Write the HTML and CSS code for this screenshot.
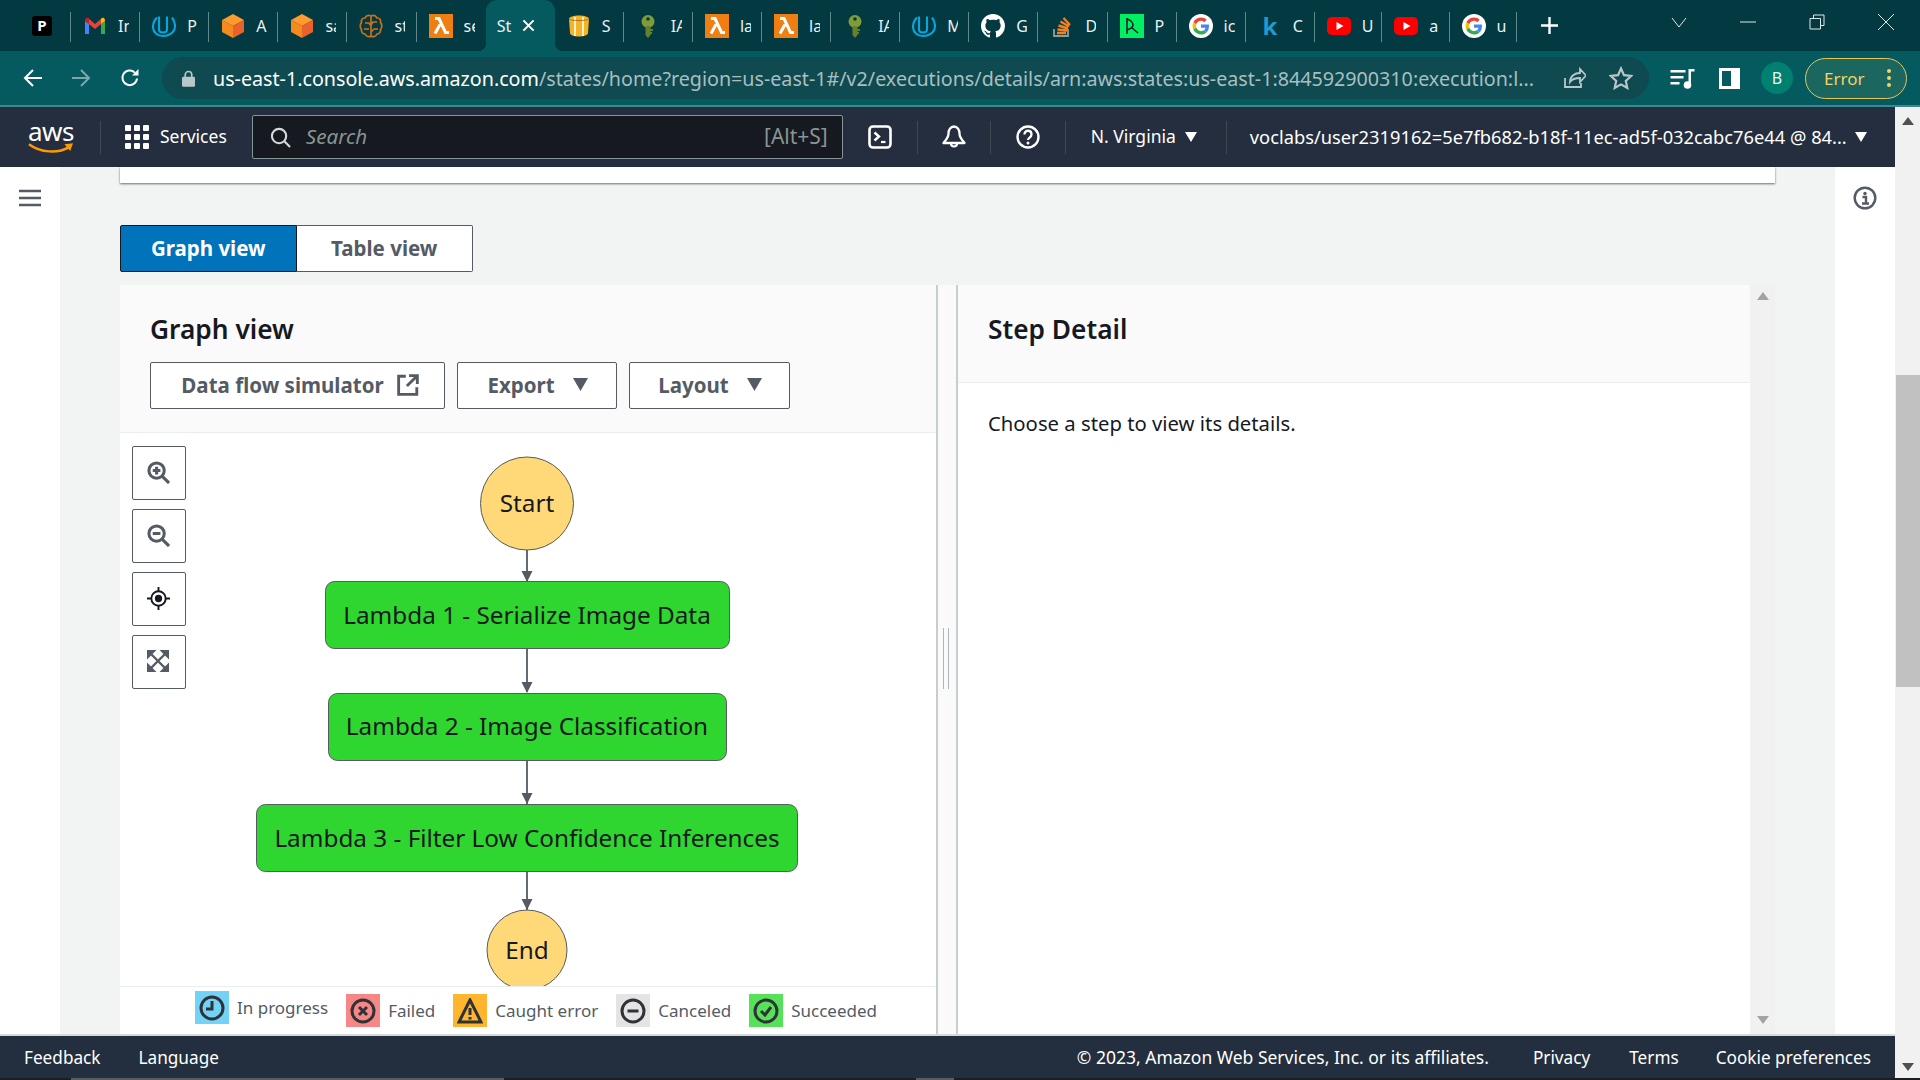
FILE: index.html
```html
<!DOCTYPE html>
<html lang="en">
<head>
<meta charset="utf-8">
<title>Step Functions</title>
<link rel="stylesheet" href="styles.css">
</head>
<body>
<svg class="defs" aria-hidden="true">
  <symbol id="i-p" viewBox="0 0 24 24"><rect x="2" y="2" width="20" height="20" rx="3" fill="#000"/><text x="12" y="17" text-anchor="middle" class="fav-letter">P</text></symbol>
  <symbol id="i-gmail" viewBox="0 0 24 24"><path d="M2 7v13h4V10z" fill="#4285f4"/><path d="M22 7v13h-4V10z" fill="#34a853"/><path d="M2 7l10 8 10-8-3-3-7 6-7-6z" fill="#ea4335"/><path d="M22 7l-4 3V5l1-1c1.500-1 3 0 3 3z" fill="#fbbc04"/><path d="M2 7l4 3V5L5 4C3.500 3 2 4 2 7z" fill="#c5221f"/></symbol>
  <symbol id="i-uda" viewBox="0 0 24 24"><path d="M5 3.500C2.500 6 1 9 1 13c0 6 5 9 10 9s12-3 12-10c0-4-1-6-3-8.500M7 2.500v13c0 2 2 3 4 3s4-1 4-3V2.500" fill="none" stroke="#02a9df" stroke-width="2.100"/></symbol>
  <symbol id="i-cube" viewBox="0 0 24 24"><path d="M12 0l11 6-11 6L1 6z" fill="#ff9a2e"/><path d="M1 6l11 6v12L1 18z" fill="#f58a1f"/><path d="M23 6l-11 6v12l11-6z" fill="#e8622a"/></symbol>
  <symbol id="i-brain" viewBox="0 0 24 24"><g fill="none" stroke="#c8701c" stroke-width="1.700"><path d="M12 2C9 .8 7 2 6 4 3 4 2 6 2.500 8.500.8 10 .8 14 2.500 15.500 2 18 4 20 6 20c1 2.500 4 3.500 6 2 2 1.500 5 .5 6-2 2 0 4-2 3.500-4.500 1.700-1.500 1.700-5.500 0-7C22 6 21 4 18 4c-1-2-3-3.200-6-2z"/><path d="M12 2v20M6 9h4l2 3M18 8h-4l-2 3M5 15h5M19 15h-4l-3 3"/></g></symbol>
  <symbol id="i-lambda" viewBox="0 0 24 24"><rect width="24" height="24" fill="#f07f13"/><path d="M6 4.500h4l6.500 14H20M11 10.500L6 19.500" fill="none" stroke="#fff" stroke-width="3"/></symbol>
  <symbol id="i-s3" viewBox="0 0 24 24"><path d="M2 5c0-2 5-3.500 10-3.500S22 3 22 5l-1 14c0 2-4 3.500-9 3.500S3 21 3 19z" fill="#f4b32a"/><path d="M8 3v19M16 3v19" stroke="#fff2c0" stroke-width="2"/><path d="M2 5c2 2 18 2 20 0" fill="none" stroke="#a8761a" stroke-width="1"/></symbol>
  <symbol id="i-key" viewBox="0 0 24 24"><circle cx="12" cy="7.500" r="6.500" fill="#7f9c36"/><circle cx="12" cy="5" r="1.800" fill="#033a42"/><path d="M9.500 12h5v9L12 24l-2.500-3z" fill="#67812a"/><path d="M14 15h3v2h-3zM14 18h2v2h-2z" fill="#67812a"/></symbol>
  <symbol id="i-gh" viewBox="0 0 16 16"><path fill="#fff" fill-rule="evenodd" d="M8 0C3.580 0 0 3.580 0 8c0 3.540 2.290 6.530 5.470 7.590.4.070.55-.17.55-.38 0-.19-.01-.82-.01-1.490-2.010.37-2.530-.49-2.690-.94-.09-.23-.48-.94-.82-1.130-.28-.15-.68-.52-.01-.53.63-.01 1.080.58 1.230.82.720 1.210 1.870.87 2.330.66.070-.52.280-.87.510-1.070-1.780-.2-3.640-.89-3.640-3.950 0-.87.310-1.590.820-2.150-.08-.2-.36-1.020.08-2.120 0 0 .67-.21 2.200.82.640-.18 1.320-.27 2-.27s1.360.09 2 .27c1.530-1.040 2.200-.82 2.200-.82.440 1.100.160 1.920.080 2.120.51.560.82 1.270.82 2.150 0 3.070-1.870 3.750-3.650 3.950.290.250.540.730.540 1.480 0 1.070-.01 1.930-.01 2.200 0 .210.150.460.550.380A8.013 8.013 0 0016 8c0-4.420-3.580-8-8-8z"/></symbol>
  <symbol id="i-so" viewBox="0 0 24 24"><path d="M4 15v7h14v-7" fill="none" stroke="#9a9a92" stroke-width="1.800"/><g stroke="#f48024" stroke-width="2.400"><path d="M7 19h9M7.500 15.500l9.500 1M8.500 11.500l9.500 3M10.500 7.500l8.500 5M13.500 4l6.500 7"/></g></symbol>
  <symbol id="i-dc" viewBox="0 0 24 24"><rect width="24" height="24" fill="#03ef62"/><path d="M7 4v16M7 5c4 1 6 4 6 6 0 2-3 4-6 5M11 13l7 6" fill="none" stroke="#05192d" stroke-width="1.500"/></symbol>
  <symbol id="i-g" viewBox="0 0 24 24"><circle cx="12" cy="12" r="12" fill="#fff"/><g transform="translate(3.500 3.500) scale(.354)"><path fill="#ea4335" d="M24 9.500c3.500 0 6.700 1.200 9.200 3.600l6.900-6.900C35.900 2.400 30.500 0 24 0 14.600 0 6.500 5.400 2.600 13.200l8 6.200C12.500 13.700 17.800 9.500 24 9.500z"/><path fill="#4285f4" d="M46.500 24.500c0-1.600-.1-3.100-.4-4.500H24v9h12.700c-.5 2.900-2.200 5.400-4.700 7l7.700 6c4.500-4.200 6.800-10.300 6.800-17.500z"/><path fill="#fbbc05" d="M10.500 28.600c-.5-1.400-.8-3-.8-4.600s.3-3.200.8-4.600l-8-6.200C.9 16.500 0 20.100 0 24s.9 7.500 2.600 10.800z"/><path fill="#34a853" d="M24 48c6.500 0 11.900-2.100 15.900-5.800l-7.700-6c-2.200 1.500-4.900 2.300-8.200 2.300-6.200 0-11.500-4.200-13.400-9.900l-8 6.200C6.500 42.600 14.600 48 24 48z"/></g></symbol>
  <symbol id="i-k" viewBox="0 0 24 24"><text x="12" y="21" text-anchor="middle" class="fav-k">k</text></symbol>
  <symbol id="i-yt" viewBox="0 0 24 24"><rect y="3" width="24" height="18" rx="5" fill="#f00"/><path d="M9.500 8l7 4-7 4z" fill="#fff"/></symbol>
</svg>

<div class="tabstrip">
  <div class="tab tab-first"><svg class="fav"><use href="#i-p"/></svg></div>
  <div class="tab"><svg class="fav"><use href="#i-gmail"/></svg><span class="tab-title">In</span></div>
  <div class="tab"><svg class="fav"><use href="#i-uda"/></svg><span class="tab-title">P</span></div>
  <div class="tab"><svg class="fav"><use href="#i-cube"/></svg><span class="tab-title">A</span></div>
  <div class="tab"><svg class="fav"><use href="#i-cube"/></svg><span class="tab-title">sa</span></div>
  <div class="tab"><svg class="fav"><use href="#i-brain"/></svg><span class="tab-title">st</span></div>
  <div class="tab tab-nosep"><svg class="fav"><use href="#i-lambda"/></svg><span class="tab-title">se</span></div>
  <div class="tab tab-active"><span class="tab-title">St</span><svg class="tab-x" viewBox="0 0 14 14"><path d="M1.500 1.500l11 11M12.500 1.500l-11 11"/></svg></div>
  <div class="tab"><svg class="fav"><use href="#i-s3"/></svg><span class="tab-title">S</span></div>
  <div class="tab"><svg class="fav"><use href="#i-key"/></svg><span class="tab-title">IA</span></div>
  <div class="tab"><svg class="fav"><use href="#i-lambda"/></svg><span class="tab-title">la</span></div>
  <div class="tab"><svg class="fav"><use href="#i-lambda"/></svg><span class="tab-title">la</span></div>
  <div class="tab"><svg class="fav"><use href="#i-key"/></svg><span class="tab-title">IA</span></div>
  <div class="tab"><svg class="fav"><use href="#i-uda"/></svg><span class="tab-title">M</span></div>
  <div class="tab"><svg class="fav"><use href="#i-gh"/></svg><span class="tab-title">G</span></div>
  <div class="tab"><svg class="fav"><use href="#i-so"/></svg><span class="tab-title">D</span></div>
  <div class="tab"><svg class="fav"><use href="#i-dc"/></svg><span class="tab-title">P</span></div>
  <div class="tab"><svg class="fav"><use href="#i-g"/></svg><span class="tab-title">ic</span></div>
  <div class="tab"><svg class="fav"><use href="#i-k"/></svg><span class="tab-title">C</span></div>
  <div class="tab tab-narrow"><svg class="fav"><use href="#i-yt"/></svg><span class="tab-title">U</span></div>
  <div class="tab tab-narrow"><svg class="fav"><use href="#i-yt"/></svg><span class="tab-title">a</span></div>
  <div class="tab tab-narrow"><svg class="fav"><use href="#i-g"/></svg><span class="tab-title">u</span></div>
  <svg class="newtab" viewBox="0 0 18 18"><path d="M9 0v18M0 9h18"/></svg>
  <div class="winctl">
    <svg class="wc" viewBox="0 0 16 16"><path d="M1 4l7 9 7-9"/></svg>
    <svg class="wc" viewBox="0 0 16 16"><path d="M0 8h16"/></svg>
    <svg class="wc" viewBox="0 0 16 16"><path d="M1 4.500h10.500V15H1zM4.500 4.500V1H15v10.500h-3.500"/></svg>
    <svg class="wc" viewBox="0 0 16 16"><path d="M0 0l16 16M16 0L0 16"/></svg>
  </div>
</div>

<div class="toolbar">
  <svg class="tb-ic tb-back" viewBox="0 0 20 20"><path d="M19 10H2M10 2l-8 8 8 8"/></svg>
  <svg class="tb-ic tb-fwd" viewBox="0 0 20 20"><path d="M1 10h17M10 2l8 8-8 8"/></svg>
  <svg class="tb-ic tb-reload" viewBox="0 0 20 20"><path d="M17 10.500A7.300 7.300 0 1 1 14.800 4.600"/><path class="solid" d="M12 7.500h6.500V1z"/></svg>
  <div class="omnibox">
    <svg class="lock" viewBox="0 0 14 18"><path d="M3.500 8V5a3.500 3.500 0 0 1 7 0v3" fill="none" stroke="#b9c7c9" stroke-width="1.800"/><rect y="7" width="14" height="11" rx="1.500" fill="#b9c7c9"/></svg>
    <span class="url"><span class="url-host">us-east-1.console.aws.amazon.com</span>/states/home?region=us-east-1#/v2/executions/details/arn:aws:states:us-east-1:844592900310:execution:l...</span>
    <svg class="omni-ic omni-share" viewBox="0 0 24 24"><path d="M3 12v9h16v-4M8 16c0-6 5-9 10-9V3l6 6.500-6 6.500v-4c-4 0-8 1-10 4z"/></svg>
    <svg class="omni-ic omni-star" viewBox="0 0 24 24"><path d="M12 2.500l3 6.700 7.200.8-5.400 4.900 1.500 7.100L12 18.400l-6.300 3.600 1.500-7.100L1.800 10l7.200-.8z"/></svg>
  </div>
  <svg class="tb-media" viewBox="0 0 24 22"><path d="M0 3h15v2.400H0zM0 9h13v2.400H0zM0 15h9v2.400H0z"/><path d="M18 2h6v2.500h-3.500V18h-2.500z"/><circle cx="17" cy="18" r="3.800"/></svg>
  <div class="tb-panel"><span class="tb-panel-in"></span></div>
  <div class="avatar">B</div>
  <div class="errpill"><span>Error</span><span class="dots"><i></i><i></i><i></i></span></div>
</div>
<div class="toolbar-line"></div>

<div class="viewport">
  <div class="page">
    <header class="topnav">
      <div class="aws-logo">
        <span class="aws-word">aws</span>
        <svg class="aws-smile" viewBox="0 0 48 13"><path d="M1 2c12 9 30 10 42 3" fill="none" stroke="#ff9900" stroke-width="2.600"/><path d="M38 2l9-1-3 8z" fill="#ff9900"/></svg>
      </div>
      <span class="nav-sep nav-sep-logo"></span>
      <svg class="grid-ic" viewBox="0 0 24 24"><g><rect width="6" height="6" rx="1"/><rect x="9" width="6" height="6" rx="1"/><rect x="18" width="6" height="6" rx="1"/><rect y="9" width="6" height="6" rx="1"/><rect x="9" y="9" width="6" height="6" rx="1"/><rect x="18" y="9" width="6" height="6" rx="1"/><rect y="18" width="6" height="6" rx="1"/><rect x="9" y="18" width="6" height="6" rx="1"/><rect x="18" y="18" width="6" height="6" rx="1"/></g></svg>
      <span class="services">Services</span>
      <div class="searchbox">
        <svg class="search-ic" viewBox="0 0 22 22"><circle cx="9.500" cy="9.500" r="7.500"/><path d="M15 15l6 6"/></svg>
        <span class="search-ph">Search</span>
        <span class="search-key">[Alt+S]</span>
      </div>
      <svg class="nav-ic nav-shell" viewBox="0 0 24 24"><rect x="1.500" y="1.500" width="21" height="21" rx="3.500" fill="none" stroke="#fff" stroke-width="2.600"/><path d="M6.500 7.500l4.500 4-4.500 4" fill="none" stroke="#fff" stroke-width="2.400"/><path d="M13 17h4.500" stroke="#fff" stroke-width="2.200"/></svg>
      <span class="nav-sep"></span>
      <svg class="nav-ic nav-bell" viewBox="0 0 24 24"><path d="M12 1.500c-3.500 0-5.500 3.500-5.500 7 0 4-2.500 6.500-5 9.500h21c-2.500-3-5-5.500-5-9.500 0-3.500-2-7-5.500-7z" fill="none" stroke="#fff" stroke-width="2.300" stroke-linejoin="round"/><path d="M9 18.500a3 3 0 0 0 6 0" fill="none" stroke="#fff" stroke-width="2.200"/></svg>
      <span class="nav-sep"></span>
      <svg class="nav-ic nav-help" viewBox="0 0 24 24"><circle cx="12" cy="12" r="10.500" fill="none" stroke="#fff" stroke-width="2.400"/><path d="M8.500 9.500c0-5 7-5 7 0 0 3-3.500 3-3.500 5.500" fill="none" stroke="#fff" stroke-width="2.300"/><circle cx="12" cy="18" r="1.500" fill="#fff"/></svg>
      <span class="nav-sep"></span>
      <span class="region">N. Virginia</span>
      <svg class="caret caret-region" viewBox="0 0 12 10"><path d="M0 0h12L6 10z"/></svg>
      <span class="nav-sep nav-sep-region"></span>
      <span class="account">voclabs/user2319162=5e7fb682-b18f-11ec-ad5f-032cabc76e44 @ 84...</span>
      <svg class="caret caret-account" viewBox="0 0 12 10"><path d="M0 0h12L6 10z"/></svg>
    </header>

    <div class="body">
      <aside class="side side-left">
        <svg class="burger" viewBox="0 0 22 18"><path d="M0 2h22M0 9h22M0 16h22"/></svg>
      </aside>
      <main class="content">
        <div class="top-card"></div>
        <div class="segmented">
          <button class="seg seg-on">Graph view</button>
          <button class="seg">Table view</button>
        </div>
        <section class="split">
          <div class="pane-graph">
            <div class="graph-head">
              <h2 class="pane-title">Graph view</h2>
              <div class="graph-actions">
                <button class="btn btn-sim">Data flow simulator
                  <svg class="btn-ext" viewBox="0 0 20 20"><path d="M8 2H1.500v16.500H18V12M11 1.500h7.500V9M18 2L9 11"/></svg>
                </button>
                <button class="btn btn-menu">Export<svg class="btn-caret" viewBox="0 0 14 12"><path d="M0 0h14L7 12z"/></svg></button>
                <button class="btn btn-menu btn-layout">Layout<svg class="btn-caret" viewBox="0 0 14 12"><path d="M0 0h14L7 12z"/></svg></button>
              </div>
            </div>
            <div class="canvas">
              <svg class="flow" viewBox="0 0 816 553" width="816" height="553">
                <g class="edges">
                  <path d="M407 117v32M407 215v44M407 327v44M407 438v39"/>
                </g>
                <g class="heads">
                  <path d="M401.500 138h11l-5.500 11zM401.500 249h11l-5.500 11zM401.500 360h11l-5.500 11zM401.500 466h11l-5.500 11z"/>
                </g>
                <circle class="n-term" cx="407" cy="70.500" r="46.500"/>
                <text class="n-label" x="407" y="79">Start</text>
                <rect class="n-task" x="205.500" y="148.500" width="404" height="67" rx="9"/>
                <text class="n-label" x="407" y="191">Lambda 1 - Serialize Image Data</text>
                <rect class="n-task" x="208.500" y="260.500" width="398" height="67" rx="9"/>
                <text class="n-label" x="407" y="302">Lambda 2 - Image Classification</text>
                <rect class="n-task" x="136.500" y="371.500" width="541" height="67" rx="9"/>
                <text class="n-label" x="407" y="414">Lambda 3 - Filter Low Confidence Inferences</text>
                <circle class="n-term" cx="407" cy="517" r="40"/>
                <text class="n-label" x="407" y="526">End</text>
              </svg>
              <div class="zoomctl">
                <button class="zbtn"><svg class="zic" viewBox="0 0 24 24"><circle cx="10" cy="10" r="8"/><path d="M16 16l7 7M6 10h8M10 6v8"/></svg></button>
                <button class="zbtn"><svg class="zic" viewBox="0 0 24 24"><circle cx="10" cy="10" r="8"/><path d="M16 16l7 7M6 10h8"/></svg></button>
                <button class="zbtn"><svg class="zic zic-target" viewBox="0 0 24 24"><circle cx="12" cy="12" r="7.500"/><circle class="zdot" cx="12" cy="12" r="3.800"/><path d="M12 0v4.500M12 19.500V24M0 12h4.500M19.500 12H24"/></svg></button>
                <button class="zbtn"><svg class="zic-fit" viewBox="0 0 22 22"><path d="M0 0h9.500L0 9.500zM22 0v9.500L12.500 0zM0 22v-9.500L9.500 22zM22 22h-9.500l9.500-9.500z" fill="#545b64"/><path d="M3 3l16 16M19 3L3 19" fill="none" stroke="#545b64" stroke-width="2.400"/></svg></button>
              </div>
            </div>
            <div class="legend">
              <div class="leg leg-raised"><span class="leg-tile t-blue"><svg class="leg-ic" viewBox="0 0 26 26"><circle cx="13" cy="13" r="11"/><path d="M13 6v8H7"/></svg></span><span>In progress</span></div>
              <div class="leg"><span class="leg-tile t-red"><svg class="leg-ic" viewBox="0 0 26 26"><circle cx="13" cy="13" r="11"/><path d="M9 9l8 8M17 9l-8 8"/></svg></span><span>Failed</span></div>
              <div class="leg"><span class="leg-tile t-orange"><svg class="leg-ic" viewBox="0 0 26 26"><path d="M13 2L2 24h22z"/><path d="M13 10v7M13 19v2.500"/></svg></span><span>Caught error</span></div>
              <div class="leg"><span class="leg-tile t-grey"><svg class="leg-ic" viewBox="0 0 26 26"><circle cx="13" cy="13" r="11"/><path d="M7.500 13h11"/></svg></span><span>Canceled</span></div>
              <div class="leg"><span class="leg-tile t-green"><svg class="leg-ic" viewBox="0 0 26 26"><circle cx="13" cy="13" r="11"/><path d="M8 13l4 4 6-8"/></svg></span><span>Succeeded</span></div>
            </div>
          </div>
          <div class="resizer"><span class="grip"></span></div>
          <div class="pane-detail">
            <div class="detail-head"><h2 class="pane-title">Step Detail</h2></div>
            <p class="detail-body">Choose a step to view its details.</p>
          </div>
          <div class="inner-scroll">
            <svg class="arrow arrow-muted" viewBox="0 0 12 8"><path d="M6 0l6 8H0z"/></svg>
            <svg class="arrow arrow-muted" viewBox="0 0 12 8"><path d="M0 0h12L6 8z"/></svg>
          </div>
        </section>
      </main>
      <aside class="side side-right">
        <svg class="info-ic" viewBox="0 0 24 24"><circle cx="12" cy="12" r="10.300"/><circle class="info-dot" cx="12" cy="7.500" r="1.700"/><path d="M9.500 11H13v6.500M9 17.500h7"/></svg>
      </aside>
    </div>

    <footer class="footer">
      <a class="foot-link">Feedback</a>
      <a class="foot-link foot-lang">Language</a>
      <span class="foot-copy">© 2023, Amazon Web Services, Inc. or its affiliates.</span>
      <a class="foot-link foot-privacy">Privacy</a>
      <a class="foot-link">Terms</a>
      <a class="foot-link">Cookie preferences</a>
    </footer>
  </div>
  <div class="page-scroll">
    <svg class="arrow" viewBox="0 0 12 8"><path d="M6 0l6 8H0z"/></svg>
    <div class="thumb"></div>
    <svg class="arrow" viewBox="0 0 12 8"><path d="M0 0h12L6 8z"/></svg>
  </div>
</div>
<div class="taskstrip"><span class="ts ts-a"></span><span class="ts ts-b"></span><span class="ts ts-c"></span><span class="ts ts-d"></span></div>
</body>
</html>
```
FILE: styles.css
```css
* { box-sizing: border-box; }
html, body { margin: 0; height: 100%; overflow: hidden; }
body {
  display: flex;
  flex-direction: column;
  width: 1920px;
  height: 1080px;
  font-family: "Noto Sans", "Open Sans", sans-serif;
  font-size: 17.5px;
  color: #16191f;
  background: #fff;
}
.defs { width: 0; height: 0; position: absolute; }
.fav-letter { font: 700 15px "Noto Sans", sans-serif; fill: #fff; }
.fav-k { font: 700 24px "Noto Sans", sans-serif; fill: #1f9bd1; }
button { font-family: inherit; }

/* Browser tab strip */
.tabstrip {
  height: 51px;
  flex: none;
  display: flex;
  align-items: stretch;
  padding-left: 2px;
  background: #033a42;
}
.tab {
  flex: 0 0 69.1px;
  display: flex;
  align-items: center;
  gap: 11px;
  padding-left: 12px;
  color: #e9f1f2;
  background: linear-gradient(#5e8a8e, #5e8a8e) right 12px / 1px 30px no-repeat;
}
.tab-first { padding-left: 28px; }
.tab-nosep { background: none; }
.tab-narrow { flex-basis: 67.4px; }
.fav { width: 24px; height: 24px; flex: none; }
.tab-title { width: 11px; overflow: hidden; font-size: 16px; line-height: 24px; white-space: nowrap; flex: none; }
.tab-active {
  position: relative;
  background: #055a60;
  border-radius: 11px 11px 0 0;
  padding-left: 11px;
  gap: 8px;
}
.tab-active .tab-title { width: 17px; }
.tab-active::before, .tab-active::after {
  content: "";
  position: absolute;
  bottom: 0;
  width: 8px;
  height: 8px;
}
.tab-active::before { left: -8px; background: radial-gradient(circle at 0 0, transparent 8px, #055a60 8.500px); }
.tab-active::after { right: -8px; background: radial-gradient(circle at 100% 0, transparent 8px, #055a60 8.500px); }
.tab-x { width: 13px; height: 13px; fill: none; stroke: #fff; stroke-width: 2.200; flex: none; }
.newtab { width: 17px; height: 17px; margin: 17px 0 0 24px; fill: none; stroke: #fff; stroke-width: 2.500; flex: none; }
.winctl { margin-left: auto; display: flex; align-items: flex-start; gap: 53px; padding: 14px 26px 0 0; }
.wc { width: 16px; height: 16px; fill: none; stroke: #dfe8e9; stroke-width: 1; display: block; }

/* Browser toolbar */
.toolbar {
  height: 54px;
  flex: none;
  display: flex;
  align-items: center;
  background: #055a60;
}
.toolbar-line { height: 2px; flex: none; background: #3f878c; }
.tb-ic { width: 20px; height: 20px; fill: none; stroke: #fff; stroke-width: 2; flex: none; }
.tb-ic .solid { fill: #fff; stroke: none; }
.tb-back { margin-left: 23px; }
.tb-fwd { margin-left: 28px; stroke: #7fa7aa; }
.tb-reload { margin-left: 29px; }
.omnibox {
  margin-left: 22px;
  width: 1487px;
  height: 42px;
  flex: none;
  display: flex;
  align-items: center;
  border-radius: 21px;
  background: #0e4a50;
  padding-left: 20px;
}
.lock { width: 13px; height: 17px; flex: none; }
.url { margin-left: 18px; font-size: 19.7px; color: #a8bfc1; white-space: nowrap; width: 1332px; overflow: hidden; flex: none; }
.url-host { color: #fff; }
.omni-ic { flex: none; width: 24px; height: 24px; fill: none; stroke: #b9c7c9; stroke-width: 1.800; }
.omni-share { margin-left: 17px; }
.omni-star { margin-left: 23px; stroke-width: 2.200; }
.tb-media { width: 25px; height: 22px; margin-left: 21px; fill: #fff; flex: none; }
.tb-panel { width: 21px; height: 21px; margin-left: 24px; background: #fff; padding: 3px 9px 3px 3px; flex: none; }
.tb-panel-in { display: block; width: 100%; height: 100%; background: #055a60; }
.avatar {
  width: 32px; height: 32px; margin-left: 21px; border-radius: 50%;
  background: #00806f; color: #e9f7f5;
  display: flex; align-items: center; justify-content: center;
  font-size: 16px; flex: none;
}
.errpill {
  width: 102px; height: 41px; margin-left: 12px;
  border: 1.500px solid #e9c75c; border-radius: 21px;
  background: #1b665f; color: #f3d266;
  display: flex; align-items: center; justify-content: space-between;
  padding: 0 15px 0 18px;
  font-size: 17px; flex: none;
}
.dots { display: flex; flex-direction: column; gap: 3px; }
.dots i { width: 4px; height: 4px; border-radius: 50%; background: #f3d266; display: block; }

/* Page shell */
.viewport { flex: 1; min-height: 0; display: flex; }
.page { flex: 1; min-width: 0; display: flex; flex-direction: column; }
.page-scroll {
  width: 25px; flex: none;
  background: #f1f1f1;
  display: flex; flex-direction: column; align-items: center;
  padding: 10px 0 7px;
}
.thumb { width: 24px; height: 312px; margin-top: 250px; background: #c1c1c1; margin-bottom: auto; }
.arrow { width: 12px; height: 8px; fill: #505050; flex: none; display: block; }
.arrow-muted { fill: #a3a3a3; }
.taskstrip { height: 2px; flex: none; display: flex; background: #1c1f22; }
.ts { display: block; height: 2px; }
.ts-a { width: 71px; }
.ts-b { width: 433px; background: #5a5d60; }
.ts-c { width: 412px; }
.ts-d { width: 38px; background: #5a5d60; }

/* AWS top nav */
.topnav {
  height: 60px; flex: none;
  display: flex; align-items: center;
  background: #242e3e;
  color: #fff;
}
.aws-logo { width: 48px; margin-left: 27px; flex: none; display: flex; flex-direction: column; align-items: center; }
.aws-word { font: 400 26px/22px "Noto Sans", sans-serif; letter-spacing: -.5px; }
.aws-smile { width: 46px; height: 13px; display: block; }
.nav-sep { width: 1px; height: 33px; background: #414750; flex: none; }
.nav-sep-logo { margin-left: 25px; }
.grid-ic { width: 24px; height: 24px; margin-left: 24px; fill: #fff; flex: none; }
.services { margin-left: 11px; padding-bottom: 2px; font-size: 17.5px; white-space: nowrap; }
.searchbox {
  margin-left: 25px;
  width: 591px; height: 44px; flex: none;
  background: #16191f;
  border: 1px solid #879596;
  border-radius: 2px;
  display: flex; align-items: center;
  padding: 0 14px 0 17px;
}
.search-ic { width: 21px; height: 21px; fill: none; stroke: #d5dbdb; stroke-width: 2.200; flex: none; }
.search-ph { margin-left: 15px; padding-bottom: 2px; font-style: italic; color: #879596; font-size: 20.6px; }
.search-key { margin-left: auto; padding-bottom: 2px; color: #879596; font-size: 21px; }
.nav-ic { width: 24px; height: 24px; flex: none; }
.nav-shell { margin: 0 25px 0 25px; }
.nav-bell { margin: 0 24px 0 24px; }
.nav-help { margin: 0 25px 0 25px; }
.region { margin-left: 0; padding: 0 0 2px 25px; font-size: 17.5px; white-space: nowrap; }
.caret { width: 12px; height: 10px; fill: #fff; flex: none; }
.caret-region { margin-left: 9px; }
.nav-sep-region { margin-left: 29px; }
.account { margin-left: 23px; padding-bottom: 2px; font-size: 18.3px; white-space: nowrap; }
.caret-account { margin-left: 8px; }

/* Body */
.body { flex: 1; min-height: 0; display: flex; }
.side { width: 60px; flex: none; background: #fff; display: flex; justify-content: center; padding-top: 22px; }
.burger { width: 22px; height: 18px; fill: none; stroke: #545b64; stroke-width: 2.600; }
.info-ic { width: 24px; height: 24px; fill: none; stroke: #545b64; stroke-width: 2.400; margin-top: -3px; }
.info-dot { fill: #545b64; stroke: none; }
.content {
  flex: 1; min-width: 0;
  background: #f2f3f3;
  padding: 0 60px 2px;
  display: flex; flex-direction: column;
  border-bottom: 0;
}
.top-card { height: 16px; flex: none; background: #fff; box-shadow: 0 1px 2px 0 rgba(0,28,36,.6); }
.segmented { display: flex; margin-top: 42px; flex: none; }
.seg {
  height: 47px; width: 176.500px;
  border: 1px solid #545b64;
  background: #fff;
  color: #545b64;
  font-size: 20.5px; font-weight: 700;
  padding: 0 0 2px;
  border-radius: 0 2px 2px 0;
  border-left: 0;
}
.seg-on { background: #0073bb; color: #fff; border-left: 1px solid #16191f; border-color: #16191f; border-radius: 2px 0 0 2px; }
.split { flex: 1; min-height: 0; margin-top: 13px; display: flex; background: #fff; }

/* Graph pane */
.pane-graph { width: 816px; flex: none; display: flex; flex-direction: column; min-height: 0; }
.graph-head { height: 148px; flex: none; background: #fafafa; border-bottom: 1px solid #eaeded; padding: 26px 30px 0 30px; }
.pane-title { margin: 0; font-size: 26.3px; line-height: 36px; font-weight: 600; color: #16191f; }
.graph-actions { display: flex; gap: 12px; margin-top: 15px; }
.btn {
  height: 47px; background: #fff;
  border: 1px solid #545b64; border-radius: 2px;
  color: #545b64;
  font-size: 20.5px; font-weight: 700;
  display: flex; align-items: center; justify-content: center;
  padding: 0 0 2px;
}
.btn-sim { width: 295px; gap: 13px; padding-left: 5px; }
.btn-menu { width: 160px; gap: 18px; padding-left: 1px; }
.btn-layout { width: 161px; }
.btn-ext { width: 22px; height: 22px; fill: none; stroke: #545b64; stroke-width: 2.600; }
.btn-caret { width: 15px; height: 13px; fill: #545b64; }
.canvas { flex: 1; min-height: 0; position: relative; overflow: hidden; background: #fff; }
.flow { display: block; }
.edges { fill: none; stroke: #545b64; stroke-width: 1.800; }
.heads { fill: #545b64; }
.n-term { fill: #ffd877; stroke: #545b64; stroke-width: 1; }
.n-task { fill: #2ed62f; stroke: #545b64; stroke-width: 1; }
.n-label { font: 400 24.3px "Noto Sans", sans-serif; fill: #16191f; text-anchor: middle; }
.zoomctl { position: absolute; left: 12px; top: 13px; display: flex; flex-direction: column; gap: 9px; }
.zbtn { width: 54px; height: 54px; padding: 0 2px 2px 0; background: #fff; border: 1px solid #545b64; border-radius: 2px; display: flex; align-items: center; justify-content: center; }
.zic { width: 23px; height: 23px; fill: none; stroke: #545b64; stroke-width: 3.200; }
.zic-target { stroke: #16191f; stroke-width: 2; }
.zdot { fill: #16191f; stroke: none; }
.zic-fit { width: 22px; height: 22px; }

/* Legend */
.legend {
  height: 48px; flex: none;
  border-top: 1px solid #eaeded;
  background: #fff;
  display: flex; align-items: flex-start;
  padding-left: 75px;
  gap: 18px;
  color: #545b64;
  font-size: 17px;
}
.leg { display: flex; align-items: center; gap: 8px; margin-top: 7px; white-space: nowrap; }
.leg-raised { margin-top: 4px; }
.leg-tile { width: 34px; height: 33px; display: flex; align-items: center; justify-content: center; flex: none; }
.t-blue { background: #72d3f6; }
.t-red { background: #f78787; }
.t-orange { background: #ffb52e; }
.t-grey { background: #e4e4e4; }
.t-green { background: #57e05a; }
.leg-ic { width: 26px; height: 26px; fill: none; stroke: #2f3237; stroke-width: 3; }

/* Resizer & detail */
.resizer {
  width: 22px; flex: none;
  background: #fafafa;
  border-left: 2px solid #c6cfcf;
  border-right: 2px solid #c6cfcf;
  display: flex; justify-content: center; padding: 343px 3px 0 0;
}
.grip { width: 6px; height: 61px; border-left: 1px solid #aab7b8; border-right: 1px solid #aab7b8; display: block; }
.pane-detail { flex: 1; min-width: 0; background: #fff; }
.detail-head { height: 98px; background: #fafafa; border-bottom: 1px solid #eaeded; padding: 26px 30px 0; }
.detail-body { margin: 27px 30px 0; font-size: 20.3px; line-height: 26px; color: #16191f; }
.inner-scroll {
  width: 25px; flex: none; background: #f1f1f1;
  display: flex; flex-direction: column; align-items: center; justify-content: space-between;
  padding: 7px 0 10px;
}

/* Footer */
.footer {
  height: 42px; flex: none;
  background: #232f3e; color: #fff;
  display: flex; align-items: center;
  padding: 0 24px;
  gap: 37px;
  font-size: 17.2px;
  box-shadow: 0 -2px 0 #d5dbdb;
  position: relative;
}
.foot-lang { margin-left: 1px; }
.foot-copy { margin-left: auto; margin-right: 7px; font-size: 17.5px; }
.foot-privacy { margin-right: 2px; }
```
